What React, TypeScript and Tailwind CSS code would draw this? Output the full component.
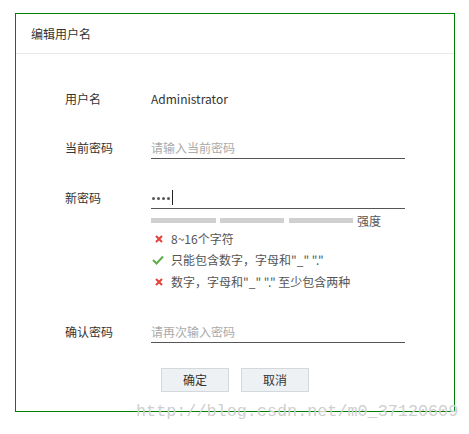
import React from "react";

const font = "font-['Noto_Sans_CJK_SC','Noto_Sans',sans-serif]";

function Cross() {
  return (
    <svg width="8" height="8" viewBox="0 0 8 8" className="ml-[4px] mr-[4px]">
      <path d="M1 1L7 7M7 1L1 7" stroke="#e5403a" strokeWidth="2" />
    </svg>
  );
}

function Check() {
  return (
    <svg width="12" height="10" viewBox="0 0 12 10" className="ml-[1px] mr-[3px]">
      <path d="M1 5L4.5 8.5L11 1.5" stroke="#5cae48" strokeWidth="2" fill="none" />
    </svg>
  );
}

function Field({ label, children }: { label: string; children: React.ReactNode }) {
  return (
    <div className="flex h-[22px]">
      <div className="w-[86px] flex items-center text-[#333]">{label}</div>
      <div className="w-[254px] border-b border-[#555] flex items-center">{children}</div>
    </div>
  );
}

export default function App() {
  const rules: { ok: boolean; text: string }[] = [
    { ok: false, text: "8~16个字符" },
    { ok: true, text: '只能包含数字，字母和"_" "."' },
    { ok: false, text: '数字，字母和"_" "." 至少包含两种' },
  ];

  return (
    <div className={`relative w-[469px] h-[434px] bg-white pt-[13px] pl-[15px] text-[12px] ${font}`}>
      <div className="w-[440px] h-[399px] border border-[#008000]">
        <div className="h-[40px] border-b border-[#e8e8e8] flex items-center pl-[15px] text-[#333]">
          编辑用户名
        </div>

        <div className="pl-[49px]">
          <div className="flex h-[22px] mt-[34px] items-center">
            <div className="w-[86px] text-[#333]">用户名</div>
            <div className="text-[#333]">Administrator</div>
          </div>

          <div className="mt-[27px]">
            <Field label="当前密码">
              <span className="text-[#aaa]">请输入当前密码</span>
            </Field>
          </div>

          <div className="mt-[28px]">
            <Field label="新密码">
              <div className="flex gap-[2px] ml-[1px] mt-[1px]">
                <span className="w-[3px] h-[3px] rounded-full bg-[#555]" />
                <span className="w-[3px] h-[3px] rounded-full bg-[#555]" />
                <span className="w-[3px] h-[3px] rounded-full bg-[#555]" />
                <span className="w-[3px] h-[3px] rounded-full bg-[#555]" />
              </div>
              <span className="ml-[2px] w-px h-[15px] bg-[#222]" />
            </Field>
          </div>

          <div className="ml-[86px]">
            <div className="flex items-center mt-[7px] h-[8px]">
              <div className="w-[65px] h-[5px] bg-[#d0d0d0]" />
              <div className="w-[64px] h-[5px] bg-[#d0d0d0] ml-[4px]" />
              <div className="w-[64px] h-[5px] bg-[#d0d0d0] ml-[5px]" />
              <span className="ml-[4px] text-[#555] mt-[2px]">强度</span>
            </div>
            <div className="mt-[4px] flex flex-col">
              {rules.map((r, i) => (
                <div key={i} className={`flex items-center h-[21px] text-[#555] ${i === 2 ? "mt-[1px]" : ""}`}>
                  {r.ok ? <Check /> : <Cross />}
                  <span className="ml-[4px]">{r.text}</span>
                </div>
              ))}
            </div>
          </div>

          <div className="mt-[29px]">
            <Field label="确认密码">
              <span className="text-[#aaa]">请再次输入密码</span>
            </Field>
          </div>

          <div className="flex ml-[96px] mt-[25px] gap-[12px]">
            <button className="w-[68px] h-[24px] bg-[#edf1f4] border border-[#d3d8dc] text-[#333]">确定</button>
            <button className="w-[68px] h-[24px] bg-[#edf1f4] border border-[#d3d8dc] text-[#333]">取消</button>
          </div>
        </div>
      </div>

      <div className="absolute left-[136px] top-[402px] font-['Liberation_Mono',monospace] text-[16.8px] text-[#cfcfcf] leading-[20px] whitespace-nowrap">
        http://blog.csdn.net/m0_37120609
      </div>
    </div>
  );
}
